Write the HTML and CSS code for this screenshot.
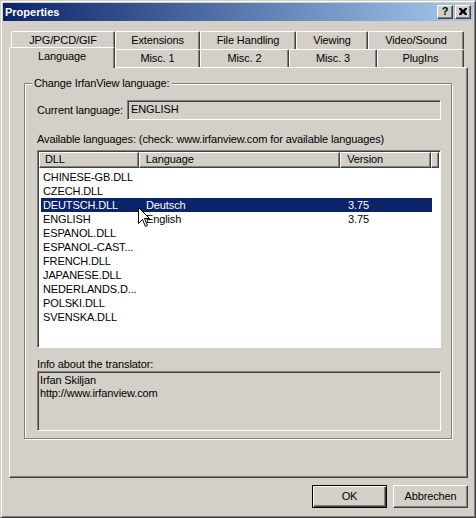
FILE: index.html
```html
<!DOCTYPE html>
<html>
<head>
<meta charset="utf-8">
<link rel="stylesheet" href="styles.css">
</head>
<body>
<div class="window">
  <div class="titlebar">
    <span class="title">Properties</span>
    <div class="tbtns">
      <span class="tbtn help">?</span>
      <span class="tbtn close"><svg width="8" height="7" viewBox="0 0 8 7"><path d="M0 0h2l2 2 2-2h2v1l-2 2.5 2 2.5v1h-2l-2-2-2 2h-2v-1l2-2.5-2-2.5z" fill="#000"/></svg></span>
    </div>
  </div>
  <div class="client">
    <div class="tabs">
      <div class="tabrow">
        <div class="tab w104">JPG/PCD/GIF</div>
        <div class="tab w85">Extensions</div>
        <div class="tab w96">File Handling</div>
        <div class="tab w72">Viewing</div>
        <div class="tab w96">Video/Sound</div>
      </div>
      <div class="tabrow">
        <div class="tab w104 selected">Language</div>
        <div class="tab w85">Misc. 1</div>
        <div class="tab w89">Misc. 2</div>
        <div class="tab w88">Misc. 3</div>
        <div class="tab w87">PlugIns</div>
      </div>
    </div>
    <div class="panel">
      <div class="group">
        <div class="legend">Change IrfanView language:</div>
        <div class="currow">
          <span class="curlabel">Current language:</span>
          <div class="edit">ENGLISH</div>
        </div>
        <div class="lbl avail">Available languages: (check: www.irfanview.com for available languages)</div>
        <div class="listview">
          <div class="lvhead">
            <div class="hcell c1">DLL</div>
            <div class="hcell c2">Language</div>
            <div class="hcell c3">Version</div>
            <div class="hcell filler"></div>
          </div>
          <div class="lvbody">
            <div class="row"><span class="cell c1">CHINESE-GB.DLL</span></div>
            <div class="row"><span class="cell c1">CZECH.DLL</span></div>
            <div class="row sel"><span class="cell c1">DEUTSCH.DLL</span><span class="cell c2">Deutsch</span><span class="cell c3">3.75</span></div>
            <div class="row"><span class="cell c1">ENGLISH</span><span class="cell c2">English</span><span class="cell c3">3.75</span></div>
            <div class="row"><span class="cell c1">ESPANOL.DLL</span></div>
            <div class="row"><span class="cell c1">ESPANOL-CAST...</span></div>
            <div class="row"><span class="cell c1">FRENCH.DLL</span></div>
            <div class="row"><span class="cell c1">JAPANESE.DLL</span></div>
            <div class="row"><span class="cell c1">NEDERLANDS.D...</span></div>
            <div class="row"><span class="cell c1">POLSKI.DLL</span></div>
            <div class="row"><span class="cell c1">SVENSKA.DLL</span></div>
            <svg class="cursor" width="13" height="21" viewBox="0 0 13 21"><path d="M0.5 0.5 L0.5 16.5 L4.5 12.5 L7.5 19.5 L9.5 18.5 L6.5 11.5 L11.5 11.5 Z" fill="#fff" stroke="#000" stroke-width="1" stroke-linejoin="miter"/></svg>
          </div>
        </div>
        <div class="lbl info">Info about the translator:</div>
        <div class="infobox">Irfan Skiljan<br>http://www.irfanview.com</div>
      </div>
    </div>
    <div class="buttons">
      <button class="btn default">OK</button>
      <button class="btn">Abbrechen</button>
    </div>
  </div>
</div>
</body>
</html>
```
FILE: styles.css
```css
* { box-sizing: border-box; }
html, body { margin: 0; padding: 0; background: #d4d0c8; }
body {
  font-family: "Liberation Sans", Arial, sans-serif;
  font-size: 11px;
  letter-spacing: -0.12px;
  color: #000;
}
.window {
  width: 476px;
  height: 518px;
  background: #d4d0c8;
  border: 1px solid;
  border-color: #d4d0c8 #404040 #404040 #d4d0c8;
  box-shadow: inset 1px 1px #fff, inset -1px -1px #808080;
  padding: 2px;
  display: flex;
  flex-direction: column;
}
.titlebar {
  height: 18px;
  flex: none;
  background: linear-gradient(to right, #0a246a, #a6caf0);
  display: flex;
  align-items: center;
  justify-content: space-between;
  padding: 0 2px 0 2px;
  color: #fff;
  font-weight: bold;
  letter-spacing: 0;
}
.title { line-height: 13px; }
.tbtns { display: flex; gap: 2px; }
.tbtn {
  width: 16px;
  height: 14px;
  background: #d4d0c8;
  border: 1px solid;
  border-color: #fff #404040 #404040 #fff;
  box-shadow: inset -1px -1px #808080;
  display: flex;
  align-items: center;
  justify-content: center;
  color: #000;
  font-weight: bold;
  font-size: 11px;
  line-height: 11px;
}
.tbtn.help { padding-bottom: 1px; }
.tbtn.close svg { display: block; margin-top: -1px; }
.client {
  flex: 1;
  display: flex;
  flex-direction: column;
  padding: 10px 5px 7px 6px;
}
.tabs { flex: none; padding: 0 4px 0 2px; }
.tabrow { display: flex; height: 18px; }
.tab {
  flex: none;
  height: 18px;
  border-top: 1px solid #fff;
  border-left: 1px solid #fff;
  border-right: 1px solid #404040;
  box-shadow: inset -1px 0 #808080;
  border-radius: 2px 2px 0 0;
  text-align: center;
  line-height: 16px;
  background: #d4d0c8;
}
.w104 { width: 104px; }
.w85 { width: 85px; }
.w96 { width: 96px; }
.w72 { width: 72px; }
.w89 { width: 89px; }
.w88 { width: 88px; }
.w87 { width: 87px; }
.tab.selected {
  width: 106px;
  margin-left: -2px;
  margin-top: -2px;
  height: 21px;
  margin-bottom: -1px;
  z-index: 1;
  line-height: 16px;
}
.panel {
  flex: 1;
  border: 1px solid;
  border-color: #fff #404040 #404040 #fff;
  box-shadow: inset -1px -1px #808080;
  padding: 15px 0 0 14px;
}
.group {
  width: 428px;
  border: 1px solid #808080;
  box-shadow: inset 1px 1px #fff, 1px 1px #fff;
  padding: 0 10px 7px 12px;
}
.legend {
  width: max-content;
  margin: -7px 0 0 -5px;
  padding: 0 2px;
  line-height: 13px;
  background: #d4d0c8;
}
.currow {
  display: flex;
  align-items: center;
  margin-top: 10px;
}
.curlabel { width: 90px; line-height: 13px; }
.edit {
  width: 314px;
  height: 20px;
  border: 1px solid;
  border-color: #808080 #fff #fff #808080;
  box-shadow: inset 1px 1px #404040;
  padding: 0 0 0 3px;
  line-height: 17px;
}
.lbl { line-height: 13px; }
.avail { margin-top: 13px; }
.listview {
  margin-top: 4px;
  width: 404px;
  height: 198px;
  border: 1px solid;
  border-color: #808080 #fff #fff #808080;
  box-shadow: inset 1px 1px #404040;
  background: #fff;
  padding: 1px 1px 0 1px;
  display: flex;
  flex-direction: column;
}
.lvhead { display: flex; height: 16px; flex: none; background: #d4d0c8; }
.hcell {
  height: 16px;
  border: 1px solid;
  border-color: #fff #404040 #404040 #fff;
  box-shadow: inset -1px -1px #808080;
  line-height: 13px;
  padding-left: 6px;
  white-space: nowrap;
}
.hcell.c1 { width: 100px; padding-left: 5px; }
.hcell.c2 { width: 202px; }
.hcell.c3 { width: 91px; }
.hcell.filler { flex: 1; }
.lvbody { position: relative; flex: 1; padding-top: 2px; }
.row {
  display: flex;
  height: 14px;
  line-height: 14px;
  margin-left: 2px;
  width: 391px;
  white-space: nowrap;
}
.row.sel { background: #0a246a; color: #fff; }
.cell { display: block; }
.cell.c1 { width: 98px; padding-left: 2px; }
.cell.c2 { width: 202px; padding-left: 7px; }
.cell.c3 { width: 91px; padding-left: 7px; }
.cursor { position: absolute; left: 99px; top: 39px; }
.info { margin-top: 10px; }
.infobox {
  width: 404px;
  height: 60px;
  border: 1px solid;
  border-color: #808080 #fff #fff #808080;
  box-shadow: inset 1px 1px #404040;
  padding: 2px 0 0 2px;
  line-height: 13px;
}
.buttons {
  flex: none;
  display: flex;
  justify-content: flex-end;
  gap: 6px;
  margin-top: 7px;
}
.btn {
  width: 75px;
  height: 23px;
  font-family: inherit;
  font-size: 11px;
  letter-spacing: -0.12px;
  color: #000;
  background: #d4d0c8;
  border: 1px solid;
  border-color: #fff #404040 #404040 #fff;
  box-shadow: inset -1px -1px #808080;
  padding: 0;
  margin: 0;
  line-height: 19px;
}
.btn.default {
  border: 1px solid #000;
  box-shadow: inset 1px 1px #fff, inset -1px -1px #404040, inset -2px -2px #808080;
}
```
